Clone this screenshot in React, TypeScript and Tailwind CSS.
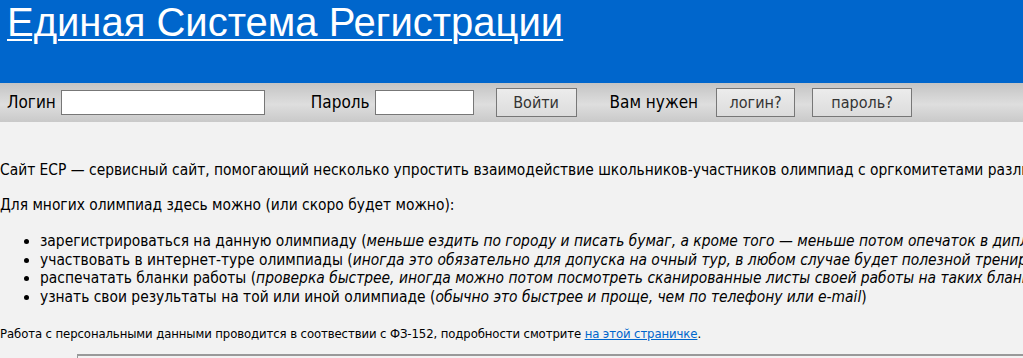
export default function App() {
  const tahoma = { fontFamily: '"DejaVu Sans Condensed", "DejaVu Sans", sans-serif' };
  const items = [
    ["зарегистрироваться на данную олимпиаду", "меньше ездить по городу и писать бумаг, а кроме того — меньше потом опечаток в дипломах"],
    ["участвовать в интернет-туре олимпиады", "иногда это обязательно для допуска на очный тур, в любом случае будет полезной тренировкой"],
    ["распечатать бланки работы", "проверка быстрее, иногда можно потом посмотреть сканированные листы своей работы на таких бланках"],
    ["узнать свои результаты на той или иной олимпиаде", "обычно это быстрее и проще, чем по телефону или e-mail"],
  ];

  return (
    <div className="w-[1023px] h-[358px] overflow-hidden bg-[#f2f2f2] text-black" style={tahoma}>
      <div className="h-[83px] bg-[#0066cc] pl-[7px]">
        <a href="#" className="text-white underline text-[40px] leading-[44px] decoration-2 underline-offset-[3px]" style={{ fontFamily: '"Liberation Sans", Arial, sans-serif' }}>
          Единая Система Регистрации
        </a>
      </div>

      <div className="h-[39px] flex items-center pl-[7px] text-[17px] bg-[linear-gradient(to_bottom,#c4c4c4,#dedede_55%,#c9c9c9)]">
        <span>Логин</span>
        <input className="ml-[5px] w-[204px] h-[25px] bg-white border border-[#777]" />
        <span className="ml-[46px]">Пароль</span>
        <input className="ml-[5px] w-[99px] h-[25px] bg-white border border-[#777]" />
        <button className="ml-[22px] w-[81px] h-[29px] border border-[#777] bg-[linear-gradient(to_bottom,#ececec,#dcdcdc)] text-[16px] text-[#333]">Войти</button>
        <span className="ml-[33px]">Вам нужен</span>
        <button className="ml-[18px] w-[79px] h-[29px] border border-[#777] bg-[linear-gradient(to_bottom,#ececec,#dcdcdc)] text-[16px] text-[#333]">логин?</button>
        <button className="ml-[17px] w-[100px] h-[29px] border border-[#777] bg-[linear-gradient(to_bottom,#ececec,#dcdcdc)] text-[16px] text-[#333]">пароль?</button>
      </div>

      <div className="text-[15.4px] leading-[18px] whitespace-nowrap">
        <p className="mt-[39px]">
          Сайт ЕСР — сервисный сайт, помогающий несколько упростить взаимодействие школьников-участников олимпиад с оргкомитетами различных олимпиад.
        </p>
        <p className="mt-[17px]">Для многих олимпиад здесь можно (или скоро будет можно):</p>
        <ul className="mt-[18px] pl-[40px] list-disc leading-[18.5px]">
          {items.map(([a, b]) => (
            <li key={a}>
              {a} (<i>{b}</i>)
            </li>
          ))}
        </ul>
        <p className="mt-[20px] text-[13px] leading-[16px] tracking-[-0.1px]">
          Работа с персональными данными проводится в соотвествии с ФЗ-152, подробности смотрите{" "}
          <a href="#" className="text-[#0066cc] underline">на этой страничке</a>.
        </p>
        <div className="ml-[77px] mt-[12px] h-[40px] border-t-2 border-l border-[#999] bg-[#f2f2f2]" />
      </div>
    </div>
  );
}
